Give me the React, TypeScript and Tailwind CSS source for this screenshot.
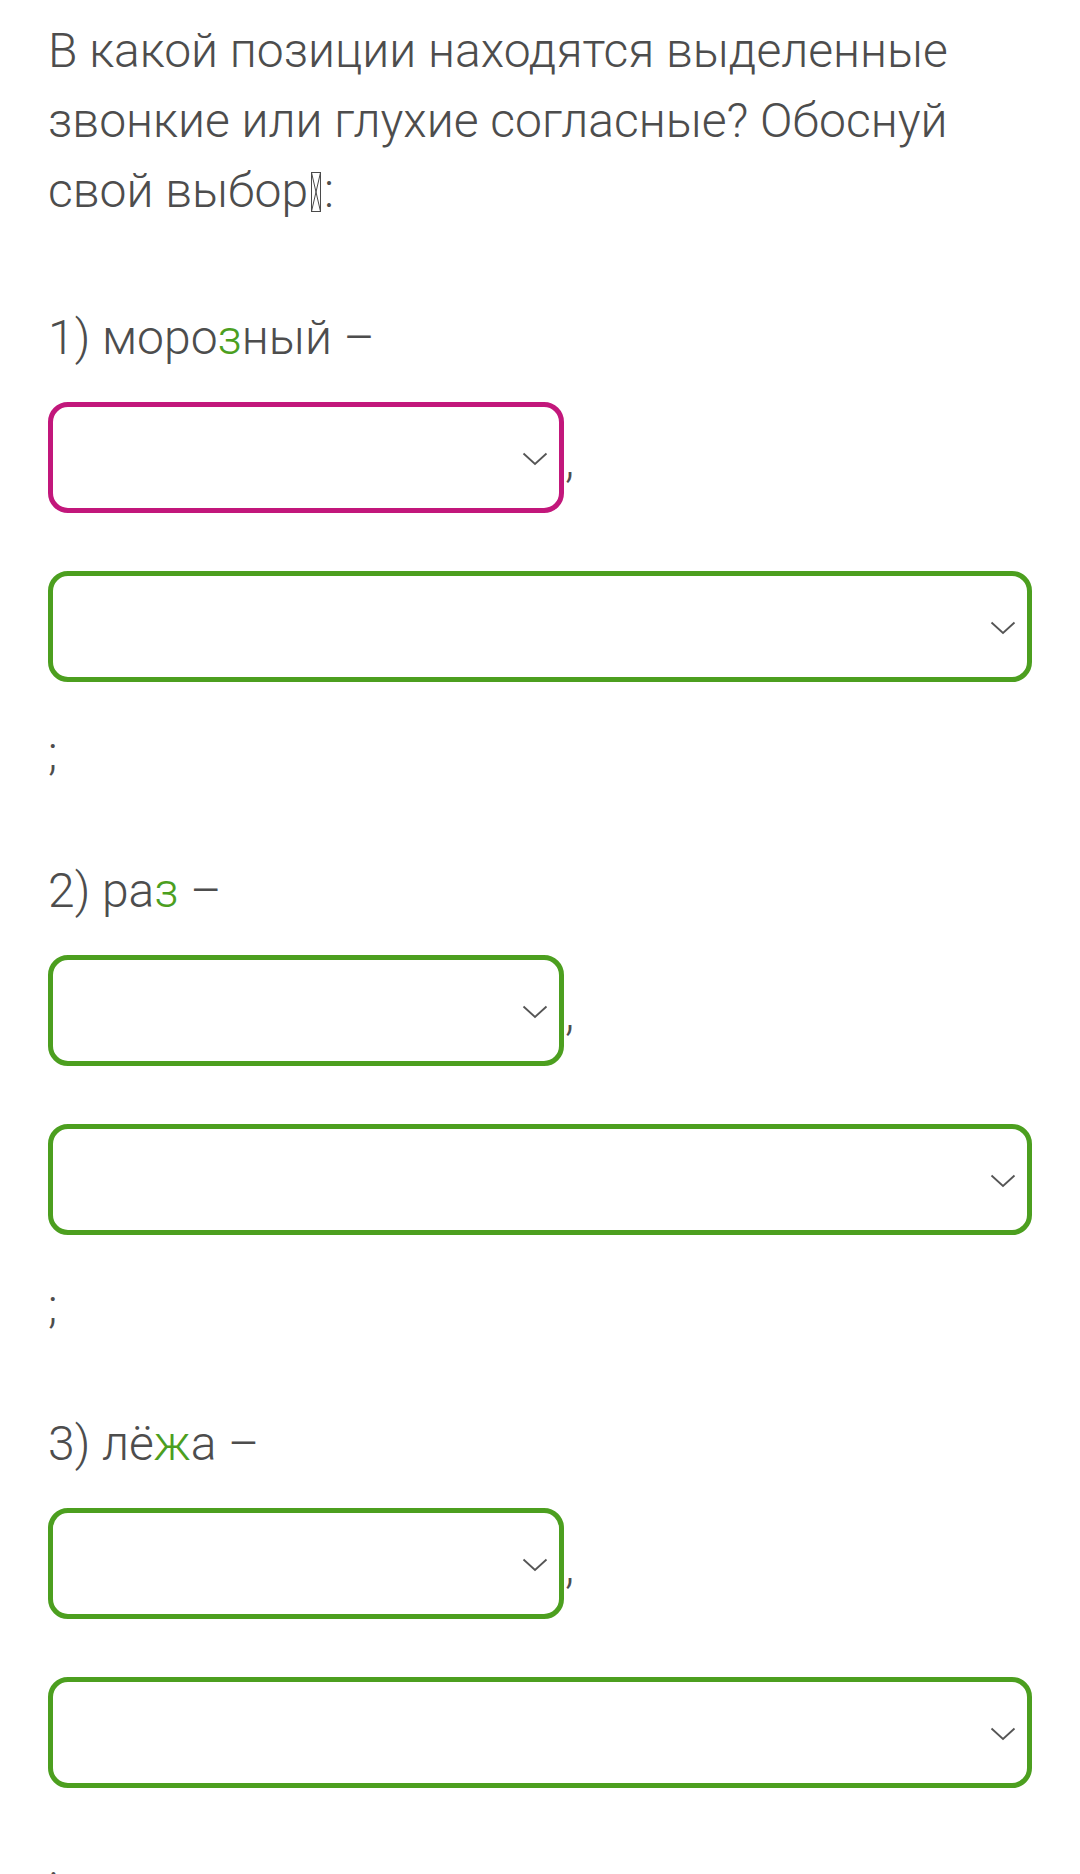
import type { ReactNode } from 'react'

type Item = {
  id: number
  before: string
  mark: string
  after: string
  last: string
  firstInvalid?: boolean
}

const items: Item[] = [
  { id: 1, before: 'моро', mark: 'з', after: 'ный', last: ';', firstInvalid: true },
  { id: 2, before: 'ра', mark: 'з', after: '', last: ';' },
  { id: 3, before: 'лё', mark: 'ж', after: 'а', last: '.' },
]

function Chevron() {
  return (
    <svg width="26" height="14" viewBox="0 0 26 14" fill="none" className="mt-[3px] shrink-0">
      <path d="M1.5 1.5 L13 12 L24.5 1.5" stroke="#555555" strokeWidth="1.8" />
    </svg>
  )
}

function Tofu() {
  return (
    <svg width="12" height="40" viewBox="0 0 12 40" fill="none" className="mx-[2px] inline-block align-[-5px]">
      <rect x="1.5" y="0.5" width="9" height="39" stroke="#4a4a4a" strokeWidth="1" />
      <path d="M1.5 0.5 L10.5 39.5 M10.5 0.5 L1.5 39.5" stroke="#4a4a4a" strokeWidth="1" />
    </svg>
  )
}

function SelectBox({ wide, invalid }: { wide?: boolean; invalid?: boolean }) {
  return (
    <div
      className={
        (wide ? 'w-full ' : 'w-[516px] ') +
        (invalid ? 'border-[#c2177b] ' : 'border-[#4c9f1f] ') +
        'flex h-[111px] items-center justify-end rounded-[20px] border-[5px] bg-white pr-[11px]'
      }
    >
      <Chevron />
    </div>
  )
}

function Section({ item, first }: { item: Item; first: boolean }): ReactNode {
  return (
    <section className={first ? 'mt-[77px]' : 'mt-[67px]'}>
      <p>
        {item.id}) {item.before}
        <span className="text-[#4c9f1f]">{item.mark}</span>
        {item.after} –
      </p>
      <div className="mt-[29px] flex items-start">
        <SelectBox invalid={item.firstInvalid} />
        <span className="mt-[23px] ml-[1px]">,</span>
      </div>
      <div className="mt-[58px]">
        <SelectBox wide />
      </div>
      <p className="mt-[37px]">{item.last}</p>
    </section>
  )
}

export default function App() {
  return (
    <div className="min-h-[1874px] bg-white px-[48px] pt-[16px] font-['Roboto',sans-serif] text-[48px] leading-[70px] font-light text-[#4d4d4d]">
      <p>
        В какой позиции находятся выделенные звонкие или глухие согласные? Обоснуй свой выбор
        <Tofu />:
      </p>
      {items.map((item, index) => (
        <Section key={item.id} item={item} first={index === 0} />
      ))}
    </div>
  )
}
